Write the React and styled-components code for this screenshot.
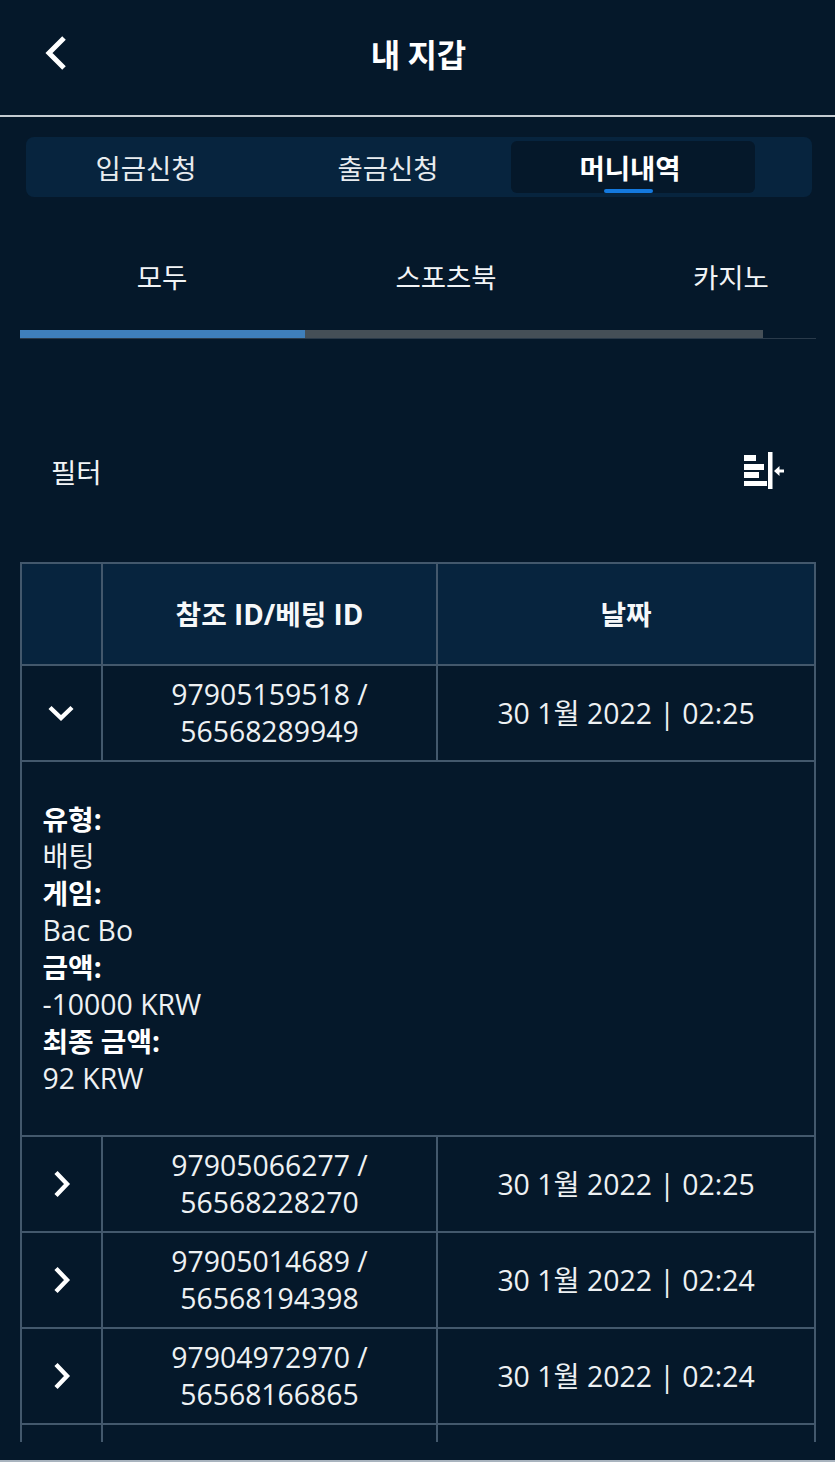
import React from "react";
import styled, { createGlobalStyle } from "styled-components";

const Global = createGlobalStyle`
  html, body { margin: 0; padding: 0; background: #05182a; }
  body { font-family: "Open Sans", "Noto Sans CJK KR", sans-serif; color: #fff; }
  * { box-sizing: border-box; }
`;
const Page = styled.div`
  width: 835px; height: 1462px; overflow: hidden; background: #05182a;
  border-bottom: 2px solid #a9b4bf;
`;
const Header = styled.header`
  height: 117px; border-bottom: 2px solid #c4cbd1;
  display: grid; grid-template-columns: 44px 1fr 44px; align-items: center;
  padding: 0 0 10px 0;
`;
const BackBtn = styled.div`
  display: flex; padding-left: 44px; width: 88px;
`;
const Title = styled.h1`
  margin: 0; text-align: center; font-size: 32px; font-weight: 700; line-height: 40px;
  font-family: "Noto Sans CJK KR", sans-serif; padding-left: 2px;
`;
const WalletTabs = styled.nav`
  margin: 20px 23px 0 26px; height: 60px; background: #07243e; border-radius: 8px;
  display: grid; grid-template-columns: 242px 242px 244px; padding: 4px 0 4px 1px;
`;
const WalletTab = styled.div`
  position: relative; display: flex; align-items: center; justify-content: center;
  padding: 0 ${p => (p.$active ? 6 : 4)}px 0 0;
  font-size: 27.5px; line-height: 40px; font-family: "Noto Sans CJK KR", sans-serif;
  font-weight: ${p => (p.$active ? 700 : 400)};
  color: ${p => (p.$active ? "#fff" : "#e8ecef")};
  background: ${p => (p.$active ? "#05182a" : "transparent")};
  border-radius: 6px;
`;
const ActiveMark = styled.span`
  position: absolute; left: 93px; bottom: 0; width: 49px; height: 4px; border-radius: 2px; background: #1479de;
`;
const SubTabs = styled.div`
  margin: 59px 19px 0 20px; display: grid; grid-template-columns: 284px 284px 228px;
`;
const SubTab = styled.div`
  text-align: center; font-size: 27.5px; line-height: 40px; font-family: "Noto Sans CJK KR", sans-serif;
  color: #f2f4f6;
  ${p => p.$last && "padding-left: 105px; white-space: nowrap; text-align: left; "}
`;
const ScrollLine = styled.div`
  margin: 34px 19px 0 20px; display: flex; border-bottom: 1px solid #2a3a4a;
`;
const Thumb = styled.div`
  width: 285px; height: 8px; background: #3f7fbb;
`;
const Rail = styled.div`
  width: 458px; height: 8px; background: #454f57;
`;
const FilterRow = styled.div`
  margin-top: 112px; padding: 0 50px 0 51px; height: 40px;
  display: flex; align-items: center; justify-content: space-between;
`;
const FilterLabel = styled.span`
  font-size: 27.5px; font-family: "Noto Sans CJK KR", sans-serif; color: #f2f4f6;
`;
const TableClip = styled.div`
  margin: 71px 19px 0 20px; height: 880px; overflow: hidden;
`;
const Table = styled.table`
  width: 796px; border-collapse: collapse; table-layout: fixed; font-size: 28.4px; line-height: 37px;
`;
const Th = styled.th`
  height: 102px; background: #07243e; border: 2px solid #43586c; font-size: 27.8px; font-weight: 700;
  text-align: center; padding: 0; color: #f6f8f9;
`;
const Td = styled.td`
  height: 96px; border: 2px solid #43586c; text-align: center; padding: 0; color: #eef1f3;
`;
const IconTd = styled(Td)`
  line-height: 0; padding-right: 1px;
`;
const DetailTd = styled.td`
  border: 2px solid #43586c; padding: 39px 20.5px 38px; text-align: left; color: #eef1f3;
`;
const DetailLabel = styled.div`
  font-weight: 700; font-size: 27.8px; color: #fff;
`;
const DetailValue = styled.div``;

const Chevron = ({ open }) => (
  <svg width="28" height="28" viewBox="0 0 28 28" fill="none" stroke="#fff" strokeWidth="4.4" style={{ display: "inline-block", verticalAlign: "middle" }}>
    {open ? <path d="M3 8.5 L14 19 L25 8.5" /> : <path d="M9 2.5 L20 14 L9 25.5" />}
  </svg>
);

const rows = [
  ["97905066277", "56568228270", "30 1월 2022 | 02:25"],
  ["97905014689", "56568194398", "30 1월 2022 | 02:24"],
  ["97904972970", "56568166865", "30 1월 2022 | 02:24"],
];
const details = [["유형:", "배팅"], ["게임:", "Bac Bo"], ["금액:", "-10000 KRW"], ["최종 금액:", "92 KRW"]];

export default function App() {
  return (
    <Page>
      <Global />
      <Header>
        <BackBtn>
          <svg width="24" height="34" viewBox="0 0 24 34" fill="none" stroke="#fff" strokeWidth="5">
            <path d="M20 2 L5 17 L20 32" />
          </svg>
        </BackBtn>
        <Title>내 지갑</Title>
        <span />
      </Header>
      <WalletTabs>
        <WalletTab>입금신청</WalletTab>
        <WalletTab>출금신청</WalletTab>
        <WalletTab $active>머니내역<ActiveMark /></WalletTab>
      </WalletTabs>
      <SubTabs>
        <SubTab>모두</SubTab>
        <SubTab>스포츠북</SubTab>
        <SubTab $last>카지노</SubTab>
      </SubTabs>
      <ScrollLine><Thumb /><Rail /></ScrollLine>
      <FilterRow>
        <FilterLabel>필터</FilterLabel>
        <svg width="41" height="38" viewBox="0 0 41 38" fill="#fff">
          <rect x="0" y="3" width="12" height="6" />
          <rect x="0" y="12" width="20" height="6" />
          <rect x="0" y="20" width="15" height="6" />
          <rect x="0" y="29" width="23" height="5" />
          <rect x="24" y="0" width="4.5" height="37" />
          <path d="M30 19 L35.5 14 V17.5 H40 V20.5 H35.5 V24 Z" />
        </svg>
      </FilterRow>
      <TableClip>
        <Table>
          <colgroup>
            <col width="81" /><col width="335" /><col width="378" />
          </colgroup>
          <thead>
            <tr><Th /><Th>참조 ID/베팅 ID</Th><Th>날짜</Th></tr>
          </thead>
          <tbody>
            <tr>
              <IconTd><Chevron open /></IconTd>
              <Td>97905159518 / 56568289949</Td>
              <Td>30 1월 2022 | 02:25</Td>
            </tr>
            <tr>
              <DetailTd colSpan="3">
                {details.map(([l, v]) => (
                  <React.Fragment key={l}>
                    <DetailLabel>{l}</DetailLabel>
                    <DetailValue>{v}</DetailValue>
                  </React.Fragment>
                ))}
              </DetailTd>
            </tr>
            {rows.map(([a, b, d]) => (
              <tr key={a}>
                <IconTd><Chevron /></IconTd>
                <Td>{a} / {b}</Td>
                <Td>{d}</Td>
              </tr>
            ))}
            <tr><IconTd /><Td /><Td /></tr>
          </tbody>
        </Table>
      </TableClip>
    </Page>
  );
}
